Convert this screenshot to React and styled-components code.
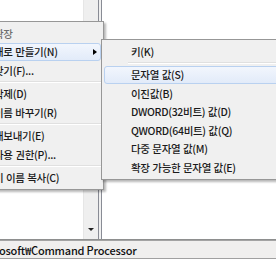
import React from "react";
import styled, { createGlobalStyle } from "styled-components";

const GlobalStyle = createGlobalStyle`
  html, body {
    margin: 0;
    padding: 0;
    background: #fff;
    overflow: hidden;
  }
  body {
    font-family: "Noto Sans CJK KR", "Noto Sans", sans-serif;
    font-size: 10.5px;
    color: #000;
  }
`;

const mainItems = [
  { label: "확장", disabled: true },
  { label: "새로 만들기(N)", submenu: true, active: true },
  { label: "찾기(F)..." },
  { sep: true },
  { label: "삭제(D)" },
  { label: "이름 바꾸기(R)" },
  { sep: true },
  { label: "내보내기(E)" },
  { label: "사용 권한(P)..." },
  { sep: true },
  { label: "키 이름 복사(C)" },
];

const newItems = [
  { label: "키(K)" },
  { sep: true },
  { label: "문자열 값(S)", active: true },
  { label: "이진값(B)" },
  { label: "DWORD(32비트) 값(D)" },
  { label: "QWORD(64비트) 값(Q)" },
  { label: "다중 문자열 값(M)" },
  { label: "확장 가능한 문자열 값(E)" },
];

const Menu = ({ items, left, top, width, indent }) => (
  <Popup $left={left} $top={top} $width={width}>
    {items.map((item, i) =>
      item.sep ? (
        <Separator key={i} $indent={indent}>
          <SeparatorLine />
        </Separator>
      ) : (
        <MenuRow
          key={i}
          $indent={indent}
          $active={item.active}
          $disabled={item.disabled}
        >
          {item.label}
          {item.submenu && <SubArrow />}
        </MenuRow>
      )
    )}
  </Popup>
);

const App = () => (
  <Window>
    <GlobalStyle />
    <Panes>
      <TreePane>
        <TreeBody />
        <Scrollbar>
          <ScrollButton>
            <DownArrow />
          </ScrollButton>
        </Scrollbar>
      </TreePane>
      <Splitter />
      <ValuePane />
    </Panes>
    <StatusBar>
      <StatusText>osoft₩Command Processor</StatusText>
    </StatusBar>

    <Menu items={mainItems} left={-35} top={21} width={139} indent={25} />
    <Menu items={newItems} left={101} top={39} width={200} indent={26} />
  </Window>
);

const Window = styled.div`
  position: relative;
  width: 276px;
  height: 260px;
  display: flex;
  flex-direction: column;
  background: #fff;
  overflow: hidden;
`;

const Panes = styled.div`
  display: flex;
  height: 240px;
  box-sizing: border-box;
  border-bottom: 1px solid #8e8f8f;
`;

const TreePane = styled.div`
  display: flex;
  width: 99px;
  box-sizing: border-box;
  border-right: 1px solid #898c95;
`;

const TreeBody = styled.div`
  flex: 1;
  background: #fff;
`;

const Scrollbar = styled.div`
  width: 14px;
  background: #efefef;
  border-left: 1px solid #e6e6e6;
  display: flex;
  flex-direction: column;
  justify-content: flex-end;
`;

const ScrollButton = styled.div`
  height: 17px;
  display: flex;
  align-items: center;
  justify-content: center;
`;

const DownArrow = styled.div`
  width: 0;
  height: 0;
  border-top: 3px solid #222;
  border-left: 3px solid transparent;
  border-right: 3px solid transparent;
  margin-bottom: 2px;
`;

const Splitter = styled.div`
  width: 2px;
  background: #f0f0f0;
`;

const ValuePane = styled.div`
  flex: 1;
  background: #fff;
  border-left: 1px solid #898c95;
`;

const StatusBar = styled.div`
  height: 19px;
  box-sizing: border-box;
  background: #f0efee;
  border-top: 1px solid #a3a3a3;
  border-bottom: 1px solid #a0a0a0;
  display: flex;
  align-items: center;
`;

const StatusText = styled.span`
  margin-left: -1px;
  font-size: 11px;
  font-weight: 500;
  letter-spacing: -0.2px;
  white-space: nowrap;
  color: #111;
`;

const Popup = styled.div`
  position: absolute;
  left: ${(p) => p.$left}px;
  top: ${(p) => p.$top}px;
  width: ${(p) => p.$width}px;
  box-sizing: border-box;
  padding: 2px;
  background: #f0f0f0;
  border: 1px solid #979797;
  box-shadow: 2px 2px 2px rgba(0, 0, 0, 0.28);
`;

const MenuRow = styled.div`
  display: flex;
  align-items: center;
  height: 18.5px;
  box-sizing: border-box;
  padding-left: ${(p) => p.$indent}px;
  white-space: pre;
  font-weight: 500;
  letter-spacing: -0.3px;
  word-spacing: 0.5px;
  color: ${(p) => (p.$disabled ? "#6d6d6d" : "#1a1a1a")};
  border: 1px solid ${(p) => (p.$active ? "#b9d1f0" : "transparent")};
  border-radius: 3px;
  background: ${(p) =>
    p.$active ? "linear-gradient(#f2f6fd, #e2ebf9)" : "transparent"};
`;

const SubArrow = styled.span`
  margin-left: auto;
  margin-right: 3px;
  width: 0;
  height: 0;
  border-left: 4px solid #000;
  border-top: 3.5px solid transparent;
  border-bottom: 3.5px solid transparent;
`;

const Separator = styled.div`
  height: 5px;
  display: flex;
  align-items: center;
  padding-left: ${(p) => p.$indent - 2}px;
`;

const SeparatorLine = styled.div`
  flex: 1;
  height: 1px;
  background: #e0e0e0;
  border-bottom: 1px solid #fff;
`;

export default App;
